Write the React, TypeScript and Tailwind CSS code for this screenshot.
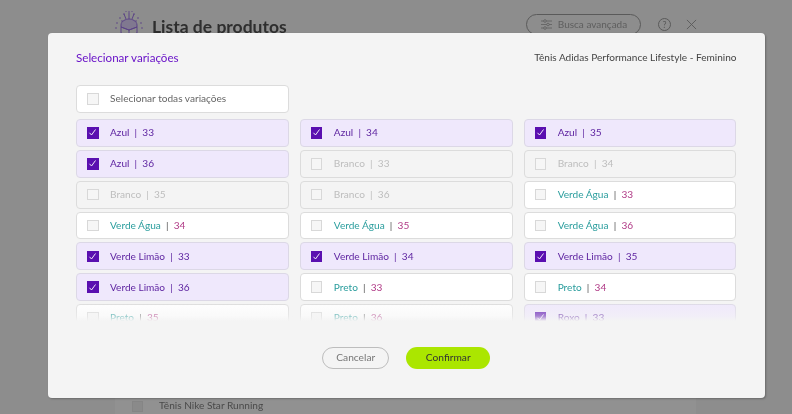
import React from "react";

type R = { c: string; n: string; s: "on" | "off" | "dis" };
const rows: R[] = [
  { c: "Azul", n: "33", s: "on" }, { c: "Azul", n: "34", s: "on" }, { c: "Azul", n: "35", s: "on" },
  { c: "Azul", n: "36", s: "on" }, { c: "Branco", n: "33", s: "dis" }, { c: "Branco", n: "34", s: "dis" },
  { c: "Branco", n: "35", s: "dis" }, { c: "Branco", n: "36", s: "dis" }, { c: "Verde Água", n: "33", s: "off" },
  { c: "Verde Água", n: "34", s: "off" }, { c: "Verde Água", n: "35", s: "off" }, { c: "Verde Água", n: "36", s: "off" },
  { c: "Verde Limão", n: "33", s: "on" }, { c: "Verde Limão", n: "34", s: "on" }, { c: "Verde Limão", n: "35", s: "on" },
  { c: "Verde Limão", n: "36", s: "on" }, { c: "Preto", n: "33", s: "off" }, { c: "Preto", n: "34", s: "off" },
  { c: "Preto", n: "35", s: "off" }, { c: "Preto", n: "36", s: "off" }, { c: "Roxo", n: "33", s: "on" },
];

function Box({ on }: { on?: boolean }) {
  return on ? (
    <span className="flex h-[11.5px] w-[11.5px] shrink-0 items-center justify-center bg-[#5a0fb0]">
      <svg width="9" height="9" viewBox="0 0 9 9" fill="none" stroke="#fff" strokeWidth="0.9">
        <path d="M1.5 4.8 3.5 7 7.5 1.5" />
      </svg>
    </span>
  ) : (
    <span className="h-[11.5px] w-[11.5px] shrink-0 border border-[#d8d8d8] bg-[#f6f6f6]" />
  );
}

function Row({ r }: { r: R }) {
  const box =
    r.s === "on" ? "bg-[#efe8fc] border-[#dcd8e6]" : r.s === "dis" ? "bg-[#f4f4f4] border-[#dcdcdc]" : "bg-white border-[#dcdcdc]";
  const a = r.s === "on" ? "text-[#5a1f9e]" : r.s === "dis" ? "text-[#bdbdbd]" : "text-[#2a9d9d]";
  const sep = r.s === "on" ? "text-[#5a1f9e]" : r.s === "dis" ? "text-[#bdbdbd]" : "text-[#555]";
  const b = r.s === "on" ? "text-[#5a1f9e]" : r.s === "dis" ? "text-[#bdbdbd]" : "text-[#b03a86]";
  return (
    <div className={`flex h-[27.85px] items-center gap-[11.5px] rounded-[4px] border pl-[10px] text-[10.1px] ${box}`}>
      <Box on={r.s === "on"} />
      <span className="whitespace-pre">
        <span className={a}>{r.c}</span>
        <span className={sep}>{"  |  "}</span>
        <span className={b}>{r.n}</span>
      </span>
    </div>
  );
}

const sparks = [
  [129, 12], [124, 14], [134, 14], [120, 18], [138, 18], [117, 23], [141, 23], [116, 28], [142, 28], [126, 11], [132, 11], [122, 21], [136, 21],
];

export default function App() {
  return (
    <div className="relative h-[414px] w-[792px] overflow-hidden bg-[#8d8d8d] font-['Lato','Liberation_Sans',sans-serif] blur-[0.3px]">
      <div className="flex h-[33px] items-start pl-[115px] pr-[95px] pt-[11px] text-[#2e2e2e] blur-[0.4px]">
        <svg width="28" height="26" viewBox="115 11 28 26" fill="none" stroke="#5b4386" strokeWidth="1" className="shrink-0">
          <path d="M121 25c0-4 5-6 8-6s8 2 8 6v2l-8 3-8-3z" fill="#6f5a96" fillOpacity="0.4" />
          <path d="M121 27l8 3 8-3v6l-8 3-8-3zM129 30v6M126 19l-2-5M132 19l2-5M129 19v-6" />
          {sparks.map(([x, y], i) => (
            <circle key={i} cx={x} cy={y} r="0.8" fill="#5b4386" stroke="none" />
          ))}
        </svg>
        <span className="ml-[9px] mt-[4px] text-[17.500px] font-bold leading-[24px]">Lista de produtos</span>
        <span className="ml-auto mt-[3px] flex h-[21px] w-[115px] items-center justify-center gap-[5px] rounded-full border border-[#5a5a5a] text-[10px] text-[#5e5e5e]">
          <svg width="13" height="13" viewBox="0 0 13 13" fill="none" stroke="#5e5e5e" strokeWidth="0.8">
            <path d="M1 3h11M1 6.500h11M1 10h11" />
            <circle cx="5" cy="3" r="1.300" fill="#8d8d8d" />
            <circle cx="8" cy="6.500" r="1.300" fill="#8d8d8d" />
            <circle cx="5" cy="10" r="1.300" fill="#8d8d8d" />
          </svg>
          Busca avançada
        </span>
        <span className="ml-[17px] mt-[7px] flex h-[13px] w-[13px] items-center justify-center rounded-full border border-[#5a5a5a] text-[9px] text-[#5a5a5a]">?</span>
        <svg width="11" height="11" viewBox="0 0 12 12" stroke="#5a5a5a" className="ml-[15px] mt-[8px]">
          <path d="M1 1l10 10M11 1 1 11" />
        </svg>
      </div>

      <div className="absolute bottom-0 left-[115px] flex h-[16px] w-[581px] items-center gap-[16px] bg-[#919191] pl-[17px] text-[10.100px] text-[#4a4a4a] blur-[0.4px]">
        <span className="h-[11px] w-[11px] border border-[#858585] bg-[#8a8a8a]" />
        Tênis Nike Star Running
      </div>

      <div className="absolute left-[48px] top-[33px] flex h-[365px] w-[716.5px] flex-col rounded-[4px] bg-[#f4f4f4] px-[28px] pt-[18px] shadow-[1px_1px_2px_rgba(0,0,0,0.25)]">
        <div className="flex h-[14px] items-center justify-between">
          <span className="text-[11.600px] text-[#6a14c8]">Selecionar variações</span>
          <span className="text-[10.050px] text-[#444]">Tênis Adidas Performance Lifestyle - Feminino</span>
        </div>
        <div className="mt-[20px] grid grid-cols-3 gap-x-[11px]">
          <div className="flex h-[28px] items-center gap-[11.5px] rounded-[4px] border border-[#dcdcdc] bg-white pl-[10px] text-[10.100px] text-[#666]">
            <Box />
            Selecionar todas variações
          </div>
        </div>
        <div className="relative mt-[6px] h-[202px] overflow-hidden">
          <div className="grid grid-cols-3 gap-x-[11px] gap-y-[3px]">
            {rows.map((r, i) => (
              <Row key={i} r={r} />
            ))}
          </div>
          <div className="absolute inset-x-0 bottom-0 h-[20px] bg-gradient-to-b from-transparent via-[#f4f4f4]/50 via-75% to-[#f4f4f4]" />
        </div>
        <div className="mt-[26px] flex justify-center gap-[17px]">
          <button className="h-[22px] w-[67px] rounded-full border border-[#bdbdbd] text-[10.200px] text-[#777]">Cancelar</button>
          <button className="h-[22px] w-[84px] rounded-full bg-[#abe600] text-[10.200px] text-[#333]">Confirmar</button>
        </div>
      </div>
    </div>
  );
}
